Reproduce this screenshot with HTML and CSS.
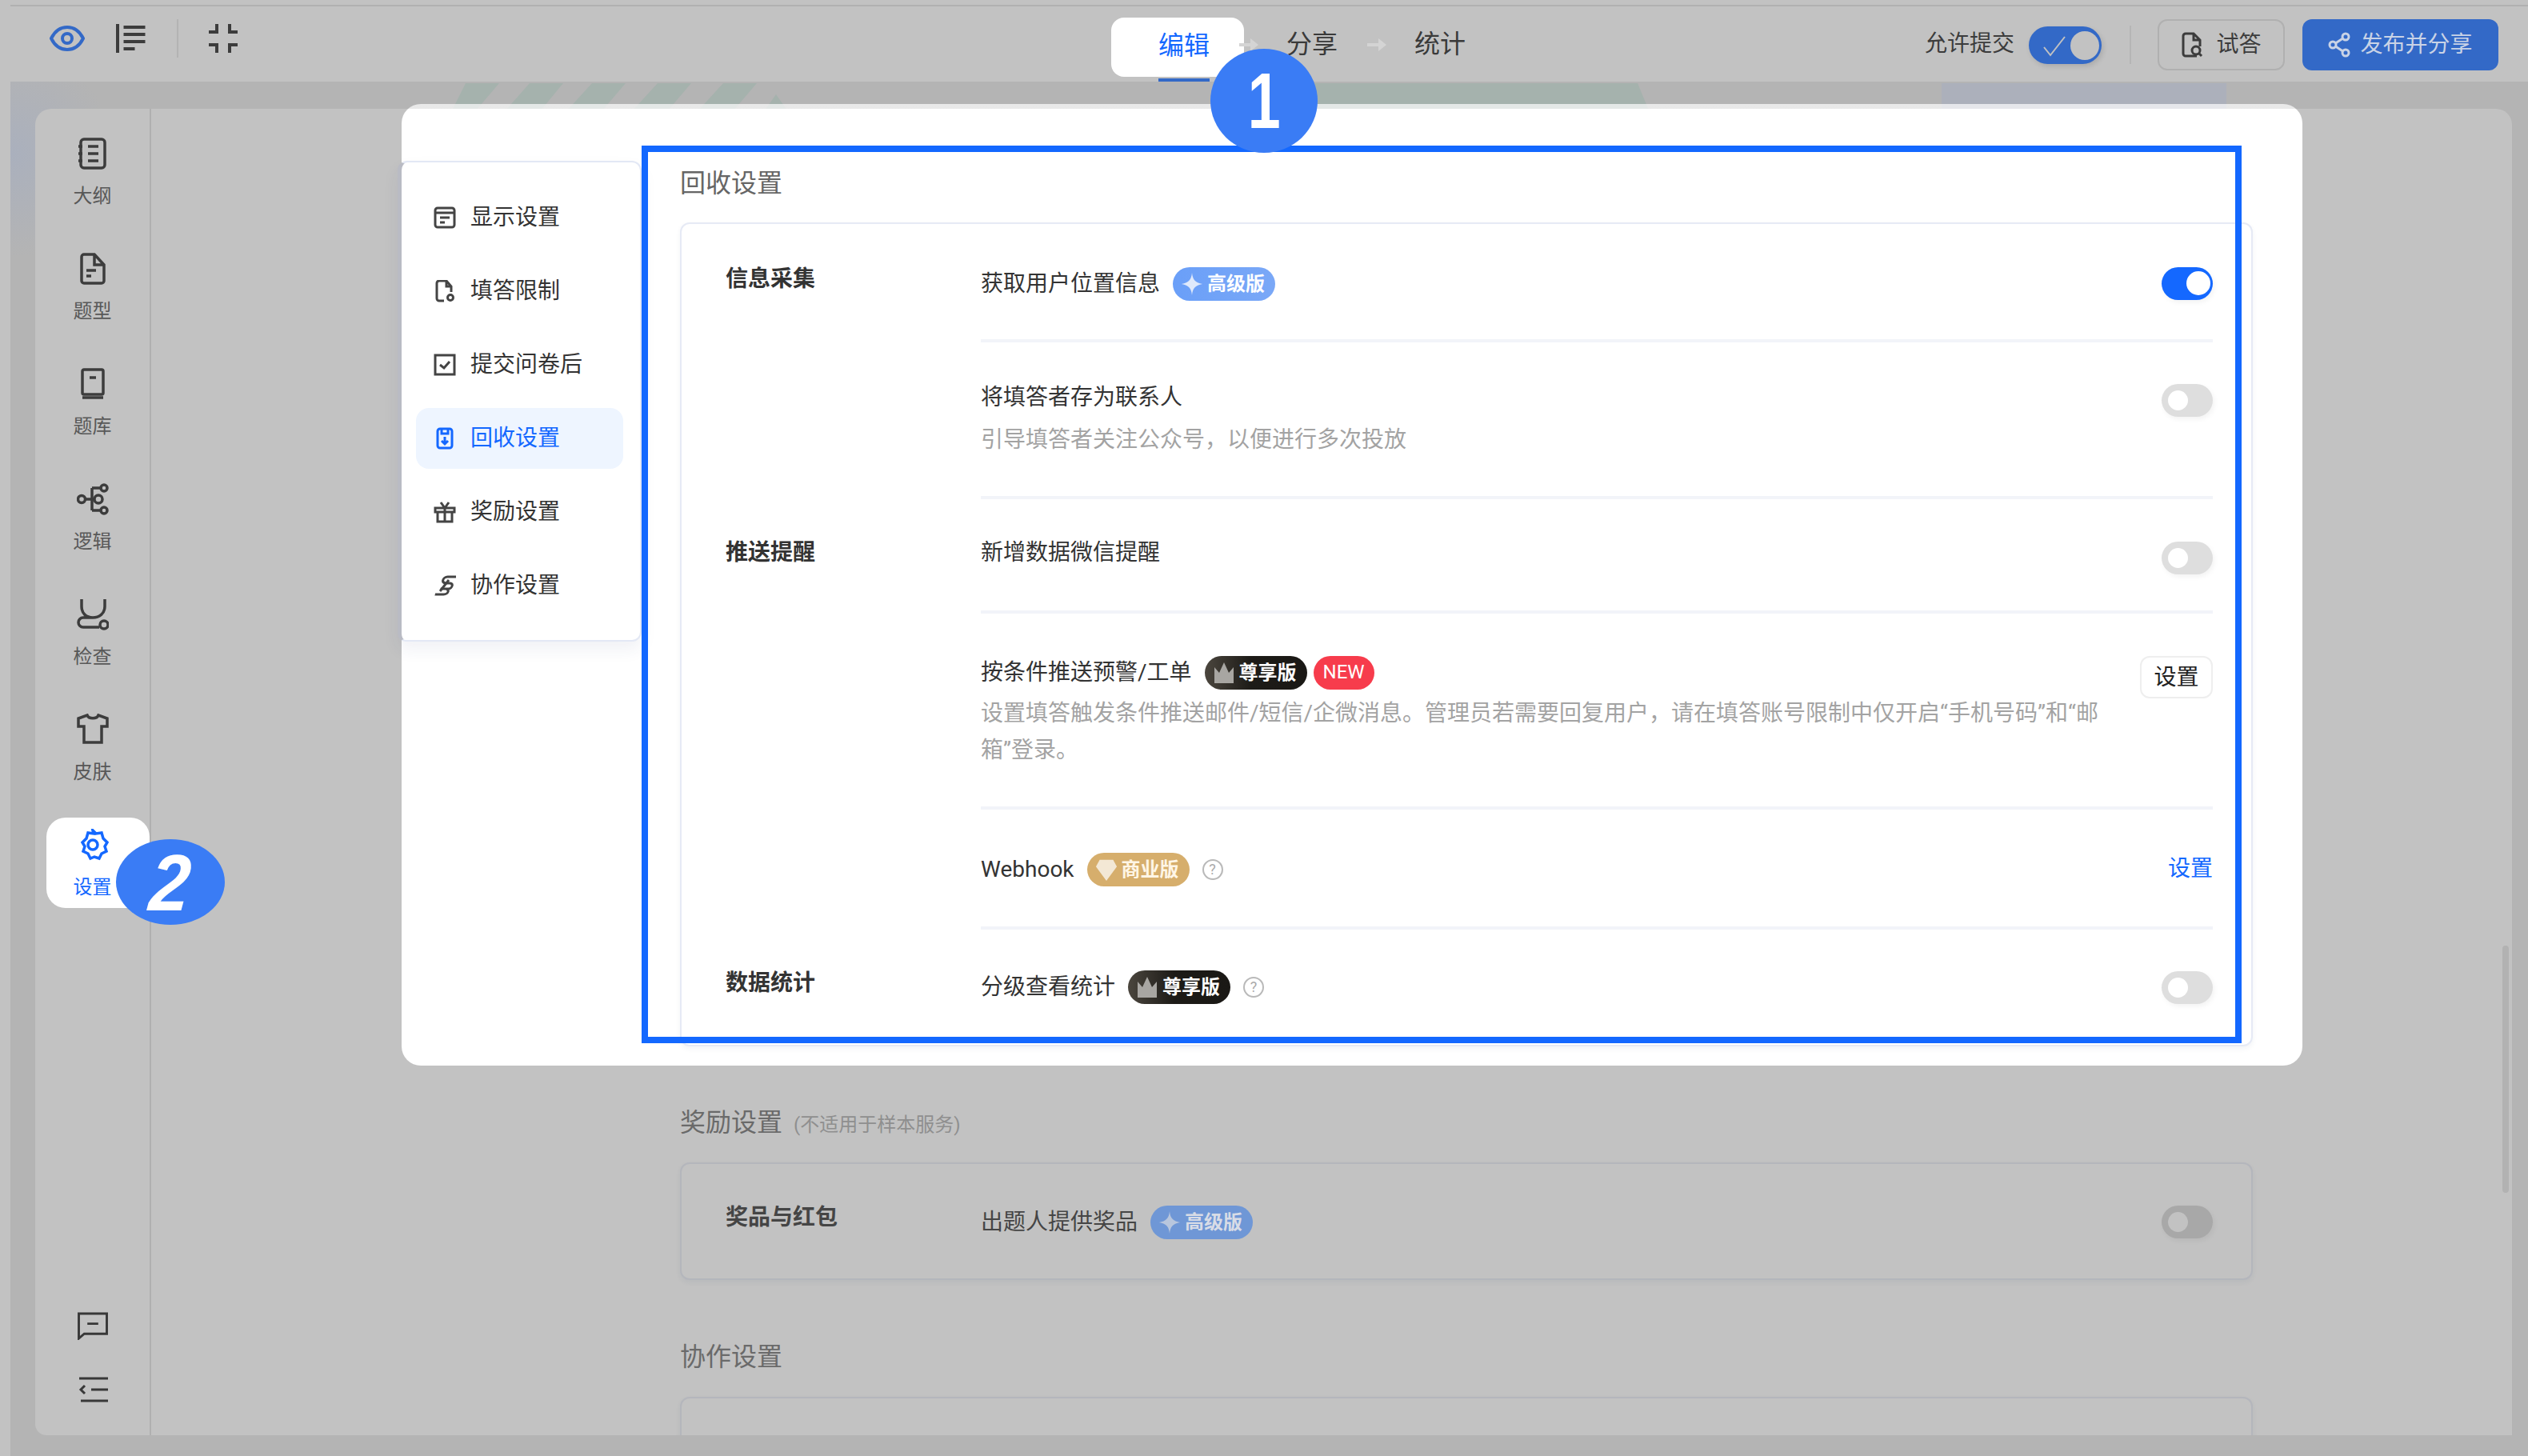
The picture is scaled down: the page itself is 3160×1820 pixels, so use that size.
FILE: index.html
```html
<!DOCTYPE html>
<html lang="zh-CN">
<head>
<meta charset="utf-8">
<title>回收设置</title>
<link rel="stylesheet" href="styles.css">
</head>
<body>
<div class="app">
  <header class="topbar">
    <div class="tools">
      <svg class="ico eye" viewBox="0 0 44 32"><path d="M2 16C7 6 14 2 22 2s15 4 20 14c-5 10-12 14-20 14S7 26 2 16z"/><circle cx="22" cy="16" r="6"/></svg>
      <svg class="ico outline" viewBox="0 0 36 36"><path d="M1.500 0v36M9 4h27M9 13h27M9 22h27M9 31h14"/></svg>
      <span class="tool-sep"></span>
      <svg class="ico shrink" viewBox="0 0 36 36"><path d="M10 0v10H0M26 0v10h10M10 36V26H0M26 36V26h10"/></svg>
    </div>
    <nav class="steps">
      <span class="step-active">编辑</span>
      <svg class="step-arrow arrow-first" viewBox="0 0 24 16"><path d="M0 6h14V0l10 8-10 8v-6H0z"/></svg>
      <span class="step">分享</span>
      <svg class="step-arrow" viewBox="0 0 24 16"><path d="M0 6h14V0l10 8-10 8v-6H0z"/></svg>
      <span class="step">统计</span>
    </nav>
    <div class="actions">
      <span class="allow">允许提交</span>
      <span class="top-switch"><svg class="ico top-check" viewBox="0 0 28 26"><path d="M1 14l8 10L27 1"/></svg><span class="top-knob"></span></span>
      <span class="action-sep"></span>
      <button class="btn-try"><svg class="ico try-ico" viewBox="0 0 28 32"><path d="M20 30H6a3 3 0 0 1-3-3V5a3 3 0 0 1 3-3h10l8 8v8M16 2v8h8"/><circle cx="19" cy="23" r="5"/><path d="M23 27l3 3"/></svg>试答</button>
      <button class="btn-publish"><svg class="ico share-ico" viewBox="0 0 28 32"><circle cx="22" cy="6" r="4"/><circle cx="6" cy="16" r="4"/><circle cx="22" cy="26" r="4"/><path d="M18.500 8L9.500 14M9.500 18l9 6"/></svg>发布并分享</button>
    </div>
  </header>

  <main class="main">
    <svg class="decor" viewBox="0 0 3147 40" preserveAspectRatio="none">
      <g class="decor-green">
        <path d="M569 2h42l-29 34h-30zM649 2h42l-28 34h-44zM727 2h42l-29 34h-44zM809 2h42l-29 34h-44zM891 2h42l-29 34h-44zM957 16l14 20h-28z"/>
        <path d="M1600 2h434l14 34h-448z"/>
      </g>
      <rect class="decor-blue" x="2414" y="2" width="356" height="34"/>
    </svg>
    <div class="workspace">
      <aside class="sidebar">
        <div class="side-item">
          <svg class="ico side-ico" viewBox="0 0 40 40"><rect x="5" y="2" width="30" height="36" rx="4"/><path d="M2 11h5M2 20h5M2 29h5M14 11h13M14 20h13M14 29h13"/></svg>
          <span>大纲</span>
        </div>
        <div class="side-item">
          <svg class="ico side-ico" viewBox="0 0 40 40"><path d="M6 5a3 3 0 0 1 3-3h13l12 13v20a3 3 0 0 1-3 3H9a3 3 0 0 1-3-3zM22 2v13h12M12 22h12M12 29h6"/></svg>
          <span>题型</span>
        </div>
        <div class="side-item">
          <svg class="ico side-ico" viewBox="0 0 40 40"><rect x="7" y="2" width="26" height="31" rx="2"/><path d="M7 37h26M16 12h8"/></svg>
          <span>题库</span>
        </div>
        <div class="side-item">
          <svg class="ico side-ico" viewBox="0 0 40 40"><circle cx="6" cy="20" r="4.500"/><circle cx="27" cy="20" r="5"/><circle cx="34" cy="6" r="4"/><circle cx="34" cy="34" r="4"/><path d="M11 20h11M19 6h11M19 34h11M19 6v28"/></svg>
          <span>逻辑</span>
        </div>
        <div class="side-item">
          <svg class="ico side-ico" viewBox="0 0 40 40"><path d="M6 1v9c0 9 6 14 14 14s15-5 15-14V1M20 24H8a6 6 0 0 0 0 12h20"/><circle cx="34" cy="33" r="5"/></svg>
          <span>检查</span>
        </div>
        <div class="side-item">
          <svg class="ico side-ico" viewBox="0 0 40 40"><path d="M13 2c2 5 12 5 14 0l11 4v10h-7v20H9V16H2V6z"/></svg>
          <span>皮肤</span>
        </div>
        <div class="side-item side-active">
          <svg class="ico side-ico" viewBox="0 0 40 40"><path d="M20 2l4 4 7-1 2 7 5 5-3 5 2 6-6 3-3 6-6-2-5 2-3-6-6-3 2-6-3-5 5-5 2-7 7 1z"/><circle cx="20" cy="20" r="6"/></svg>
          <span>设置</span>
        </div>
        <div class="side-bottom">
          <svg class="ico bottom-ico" viewBox="0 0 40 36"><path d="M2 2h36v26H9l-7 6zM13 15h14"/></svg>
          <svg class="ico collapse-ico" viewBox="0 0 40 32"><path d="M3 2h36M18 16h21M5 30h34M10 11l-5 5 5 5"/></svg>
        </div>
      </aside>
      <section class="canvas">
        <h2 class="sec-title dim-title">奖励设置<small>(不适用于样本服务)</small></h2>
        <div class="sec-card reward-card">
          <div class="group">
            <div class="group-label">奖品与红包</div>
            <div class="group-rows">
              <div class="row row-1 row-last">
                <div class="row-title">出题人提供奖品
                  <span class="badge badge-pro badge-dim"><svg class="badge-ico" viewBox="0 0 28 30"><path d="M14 0c1 9 4 13 14 15-10 2-13 6-14 15-1-9-4-13-14-15C10 13 13 9 14 0z"/></svg>高级版</span>
                </div>
                <span class="switch switch-dim"></span>
              </div>
            </div>
          </div>
        </div>
        <h2 class="sec-title dim-title second-title">协作设置</h2>
        <div class="sec-card collab-card"></div>
      </section>
      <span class="scrollbar"></span>
    </div>
  </main>

  <div class="modal">
    <ul class="menu">
      <li class="menu-item"><svg class="ico menu-ico" viewBox="0 0 28 28"><rect x="2" y="2" width="24" height="24" rx="3"/><path d="M2 8h24M8 14h12M8 20h6"/></svg>显示设置</li>
      <li class="menu-item"><svg class="ico menu-ico" viewBox="0 0 28 28"><path d="M13 26H7a3 3 0 0 1-3-3V4a3 3 0 0 1 3-3h9l6 7v7M16 1v7h6"/><circle cx="21" cy="22" r="3.500"/></svg>填答限制</li>
      <li class="menu-item"><svg class="ico menu-ico" viewBox="0 0 28 28"><rect x="2" y="2" width="24" height="24"/><path d="M8 14l5 4 7-8"/></svg>提交问卷后</li>
      <li class="menu-item menu-active"><svg class="ico menu-ico" viewBox="0 0 28 28"><rect x="5" y="2" width="18" height="24" rx="3"/><path d="M10 3v5h8V3M14 12v9M10 17l4 4 4-4"/></svg>回收设置</li>
      <li class="menu-item"><svg class="ico menu-ico" viewBox="0 0 28 28"><path d="M2 9h24v5H2zM5 14v12h18V14M14 9v17M9 2l5 7 5-7"/></svg>奖励设置</li>
      <li class="menu-item"><svg class="ico menu-ico" viewBox="0 0 28 28"><g transform="translate(5 0) skewX(-14)"><path d="M24 3H13C7 3 7 11 13 11h5c5 0 5 7 0 7H8M3 25h11c6 0 6-7 0-7"/></g><path d="M19 7L8 21"/></svg>协作设置</li>
    </ul>
    <div class="panel">
      <h2 class="sec-title panel-title">回收设置</h2>
      <div class="sec-card main-card">
        <div class="group">
          <div class="group-label">信息采集</div>
          <div class="group-rows">
            <div class="row row-1">
              <div class="row-title">获取用户位置信息
                <span class="badge badge-pro"><svg class="badge-ico" viewBox="0 0 28 30"><path d="M14 0c1 9 4 13 14 15-10 2-13 6-14 15-1-9-4-13-14-15C10 13 13 9 14 0z"/></svg>高级版</span>
              </div>
              <span class="switch switch-on"></span>
            </div>
            <div class="row row-2">
              <div class="row-main">
                <div class="row-title">将填答者存为联系人</div>
                <p class="row-desc">引导填答者关注公众号，以便进行多次投放</p>
              </div>
              <span class="switch"></span>
            </div>
          </div>
        </div>
        <div class="group">
          <div class="group-label">推送提醒</div>
          <div class="group-rows">
            <div class="row row-3">
              <div class="row-title">新增数据微信提醒</div>
              <span class="switch"></span>
            </div>
            <div class="row row-4">
              <div class="row-main">
                <div class="row-title">按条件推送预警/工单
                  <span class="badge-pair">
                    <span class="badge badge-vip"><svg class="badge-ico" viewBox="0 0 28 26"><path d="M2 6l6 7 6-13 6 13 6-7v20H2z"/></svg>尊享版</span>
                    <span class="badge-new">NEW</span>
                  </span>
                </div>
                <p class="row-desc">设置填答触发条件推送邮件/短信/企微消息。管理员若需要回复用户，请在填答账号限制中仅开启“手机号码”和“邮箱”登录。</p>
              </div>
              <button class="btn-set">设置</button>
            </div>
            <div class="row row-5">
              <div class="row-title">Webhook
                <span class="badge badge-biz"><svg class="badge-ico" viewBox="0 0 28 30"><path d="M5 2h18l5 9-14 19L0 11z"/></svg>商业版</span>
                <span class="help">?</span>
              </div>
              <a class="link-set">设置</a>
            </div>
          </div>
        </div>
        <div class="group">
          <div class="group-label">数据统计</div>
          <div class="group-rows">
            <div class="row row-6 row-last">
              <div class="row-title">分级查看统计
                <span class="badge badge-vip"><svg class="badge-ico" viewBox="0 0 28 26"><path d="M2 6l6 7 6-13 6 13 6-7v20H2z"/></svg>尊享版</span>
                <span class="help">?</span>
              </div>
              <span class="switch"></span>
            </div>
          </div>
        </div>
      </div>
    </div>
    <div class="frame"></div>
  </div>

  <div class="callout callout-one"><span>1</span></div>
  <div class="callout callout-two"><span>2</span></div>
</div>
</body>
</html>
```

FILE: styles.css
```css
* { box-sizing: border-box; }
html, body { margin: 0; padding: 0; }
body {
  width: 3160px;
  height: 1820px;
  overflow: hidden;
  font-family: Roboto, "Noto Sans CJK SC", sans-serif;
  font-size: 28px;
  line-height: 40px;
  color: #333;
}
h2, p, ul { margin: 0; padding: 0; }
ul { list-style: none; }
button { font: inherit; cursor: pointer; }
.ico { fill: none; stroke: currentColor; stroke-width: 3; display: block; flex: none; }

.app {
  position: relative;
  width: 3160px;
  height: 1820px;
  padding: 6px 0 0 13px;
  background: #c2c2c2;
  display: flex;
  flex-direction: column;
}

/* top bar */
.topbar {
  height: 96px;
  flex: none;
  border-top: 2px solid #b1b1b1;
  display: grid;
  grid-template-columns: 1376px auto 1fr;
  align-items: start;
}
.tools {
  display: flex;
  align-items: center;
  height: 48px;
  margin-top: 16px;
  padding-left: 49px;
  color: #3c3c3c;
}
.eye { width: 44px; height: 32px; color: #3369c7; stroke-width: 4; margin-right: 39px; }
.outline { width: 37px; height: 36px; stroke-width: 4; margin-right: 39px; }
.tool-sep { width: 2px; height: 48px; background: #b3b3b3; margin-right: 38px; }
.shrink { width: 36px; height: 36px; stroke-width: 4; }

.steps {
  display: flex;
  align-items: center;
  margin-top: 14px;
  height: 74px;
  font-size: 32px;
  line-height: 44px;
  color: #3a3a3a;
}
.step-active {
  position: relative;
  width: 166px;
  height: 74px;
  background: #fff;
  border-radius: 16px;
  color: #1468ff;
  display: flex;
  align-items: center;
  padding: 0 0 4px 59px;
}
.step-active::after {
  content: "";
  position: absolute;
  left: 59px;
  bottom: -8px;
  width: 64px;
  height: 6px;
  background: #3369c7;
}
.step { padding-bottom: 8px; }
.step-arrow { width: 24px; height: 16px; fill: #d4d4d4; margin: 0 35px 6px 37px; flex: none; }
.arrow-first { margin-left: -6px; position: relative; }

.actions {
  display: flex;
  justify-content: flex-end;
  align-items: center;
  height: 64px;
  margin-top: 16px;
  padding-right: 37px;
}
.allow { color: #3c3c3c; margin: -2px 18px 0 0; }
.top-switch {
  position: relative;
  width: 91px;
  height: 47px;
  background: #3369c7;
  border-radius: 24px;
  box-shadow: 2px 3px 6px rgba(0,0,0,.12);
}
.top-check { position: absolute; left: 18px; top: 12px; width: 28px; height: 26px; color: #c2c2c2; stroke-width: 2; }
.top-knob { position: absolute; right: 3px; top: 6px; width: 36px; height: 36px; border-radius: 50%; background: #c2c2c2; }
.action-sep { width: 2px; height: 48px; background: #b5b5b5; margin: 0 33px 0 35px; }
.btn-try {
  width: 159px;
  height: 64px;
  padding: 0;
  background: transparent;
  border: 2px solid #b0b0b0;
  border-radius: 12px;
  color: #3c3c3c;
  display: flex;
  align-items: center;
  justify-content: center;
  gap: 16px;
}
.try-ico { width: 28px; height: 32px; }
.btn-publish {
  width: 245px;
  height: 64px;
  margin-left: 22px;
  padding: 0;
  background: #3369c7;
  border: 0;
  border-radius: 12px;
  color: #c9d3e6;
  display: flex;
  align-items: center;
  justify-content: center;
  gap: 12px;
}
.share-ico { width: 28px; height: 32px; }

/* main */
.main {
  position: relative;
  flex: 1;
  min-height: 0;
  padding: 34px 20px 26px 31px;
  background: radial-gradient(circle 130px at 0 90px, #aab0bd, rgba(170,176,189,0)) #b4b4b4;
}
.decor { position: absolute; left: 0; top: 0; width: 3147px; height: 40px; }
.decor-green { fill: #a5b2ad; }
.decor-blue { fill: #acb0bb; }
.workspace {
  position: relative;
  height: 100%;
  display: flex;
  background: #c2c2c2;
  border-radius: 20px 20px 0 14px;
  overflow: hidden;
}
.sidebar {
  width: 145px;
  flex: none;
  border-right: 2px solid #b0b0b0;
  padding: 22px 0 41px 14px;
  display: flex;
  flex-direction: column;
  gap: 31px;
  font-size: 24px;
  line-height: 34px;
  color: #585858;
}
.side-item {
  width: 129px;
  height: 113px;
  padding: 14px 14px 0 0;
  display: flex;
  flex-direction: column;
  align-items: center;
  gap: 16px;
  flex: none;
}
.side-ico { width: 40px; height: 40px; color: #3c3c3c; stroke-width: 3.500; }
.side-active {
  background: #fff;
  border-radius: 24px;
  color: #1468ff;
}
.side-active .side-ico { color: #1468ff; }
.side-bottom {
  margin-top: auto;
  width: 115px;
  display: flex;
  flex-direction: column;
  align-items: center;
  gap: 46px;
}
.bottom-ico { width: 40px; height: 35px; color: #383838; }
.collapse-ico { width: 40px; height: 32px; color: #383838; }

.canvas {
  flex: 1;
  min-width: 0;
  padding: 1245px 0 0 661px;
}
.sec-title {
  font-size: 32px;
  font-weight: 400;
  line-height: 44px;
  margin-bottom: 28px;
  color: #666;
}
.panel-title { padding-top: 1px; margin-bottom: 27px; }
.sec-title small { font-size: 24px; line-height: 1; color: #8f8f8f; margin-left: 14px; }
.dim-title { color: #6a6a6a; }
.second-title { margin-top: 74px; }
.sec-card {
  width: 1966px;
  padding-top: 2px;
  border: 2px solid #e6eaf5;
  border-radius: 12px;
  background: #fff;
  box-shadow: 0 3px 6px rgba(40,60,110,.06);
}
.reward-card { height: 147px; padding-top: 0; background: #c2c2c2; border-color: #b4b6bc; color: #454545; }
.collab-card { height: 200px; background: #c2c2c2; border-color: #b4b6bc; }
.main-card { height: 1030px; }
.group { display: flex; }
.group-label { width: 319px; margin-left: 55px; padding-top: 47px; font-weight: 700; flex: none; }
.group-rows { width: 1540px; flex: none; }
.row {
  display: flex;
  justify-content: space-between;
  align-items: flex-start;
  border-bottom: 4px solid #f2f4f9;
}
.row-last { border-bottom: 0; }
.row-1 { padding: 52px 0 48px; }
.row-2 { padding: 49px 0 47px; }
.row-3 { padding: 47px 0 45px; }
.row-4 { padding: 53px 0 47px; }
.row-5 { padding: 54px 0 50px; }
.row-6 { padding: 51px 0 0; }
.row-2 .switch { margin-top: 3px; }
.row-3 .switch { margin-top: 6px; }
.row-6 .switch { margin-top: 1px; }
.row-main { width: 1412px; }
.row-title { display: flex; align-items: center; gap: 16px; color: inherit; }
.row-desc { color: #a3a3a3; line-height: 46px; margin-top: 10px; }
.row-4 .row-desc { margin-top: 7px; }
.badge-pair { display: flex; gap: 8px; }
.badge {
  width: 128px;
  height: 42px;
  padding-left: 10px;
  border-radius: 21px;
  display: inline-flex;
  align-items: center;
  gap: 5px;
  font-size: 24px;
  font-weight: 700;
  line-height: 42px;
  color: #fff;
  flex: none;
}
.badge-ico { width: 28px; height: 28px; flex: none; }
.badge-pro { background: linear-gradient(90deg, #6a9ff8, #7aa8f7); }
.badge-pro .badge-ico { fill: #dfe9fb; }
.badge-dim { background: #6f97d6; color: #d8dce6; }
.badge-dim .badge-ico { fill: #b8c6dd; }
.badge-vip { background: linear-gradient(90deg, #4b463e, #1d1b17 45%, #1a1815); }
.badge-vip .badge-ico { fill: #a8a6a2; }
.badge-biz { background: #d6ae6c; color: #fff6e6; }
.badge-biz .badge-ico { fill: #f3e8d5; }
.badge-new {
  width: 76px;
  height: 42px;
  border-radius: 21px;
  background: #f73c4c;
  color: #fff;
  font-size: 24px;
  line-height: 40px;
  text-align: center;
}
.help {
  width: 26px;
  height: 26px;
  border: 2px solid #b9b9b9;
  border-radius: 50%;
  color: #aaa;
  font-size: 18px;
  line-height: 22px;
  text-align: center;
  flex: none;
}
.switch {
  position: relative;
  width: 64px;
  height: 41px;
  border-radius: 21px;
  background: #dedede;
  flex: none;
  box-shadow: 2px 3px 6px rgba(0,0,0,.05);
}
.switch::after {
  content: "";
  position: absolute;
  left: 8px;
  top: 8px;
  width: 25px;
  height: 25px;
  border-radius: 50%;
  background: #fff;
}
.switch-on { background: #1468ff; }
.switch-on::after { left: 31px; top: 5px; width: 30px; height: 30px; }
.switch-dim { background: #a8a8a8; }
.switch-dim::after { background: #c2c2c2; }
.btn-set {
  width: 91px;
  height: 53px;
  padding: 0;
  background: #fff;
  border: 2px solid #eee;
  border-radius: 12px;
  color: #222;
  line-height: 46px;
}
.link-set { color: #1468ff; }

.scrollbar {
  position: absolute;
  right: 4px;
  top: 1046px;
  width: 8px;
  height: 309px;
  border-radius: 4px;
  background: #b2b2b2;
}

/* overlay dialog */
.modal {
  position: absolute;
  left: 502px;
  top: 130px;
  width: 2376px;
  height: 1202px;
  display: flex;
  align-items: flex-start;
  border-radius: 24px;
  background: linear-gradient(rgba(255,255,255,.7) 6px, #fff 6px);
}
.menu {
  width: 305px;
  height: 601px;
  margin: 71px 0 0 -5px;
  padding: 31px 21px 0 18px;
  flex: none;
  display: flex;
  flex-direction: column;
  gap: 16px;
  background: #fff;
  border: 2px solid #e3e8f5;
  border-left: 5px solid #b9bbc4;
  border-radius: 12px 12px 12px 10px;
  box-shadow: 0 10px 20px rgba(40,60,110,.07);
}
.menu-item {
  height: 76px;
  padding-left: 22px;
  display: flex;
  align-items: center;
  gap: 18px;
  border-radius: 16px;
  color: #333;
}
.menu-ico { width: 28px; height: 28px; color: #444; }
.menu-active { background: #eef5ff; color: #1468ff; }
.menu-active .menu-ico { color: #1468ff; }
.panel { margin-left: 48px; padding-top: 76px; width: 1966px; flex: none; }
.frame {
  position: absolute;
  left: 300px;
  top: 52px;
  width: 2000px;
  height: 1122px;
  border: 8px solid #1368ff;
  pointer-events: none;
}

/* numbered callouts */
.callout {
  position: absolute;
  background: #3a7cf5;
  color: #fff;
  font-family: "Liberation Sans", sans-serif;
  font-weight: 700;
  font-size: 98px;
  line-height: 1;
  display: flex;
  align-items: center;
  justify-content: center;
  border-radius: 50%;
}
.callout-one { left: 1513px; top: 61px; width: 134px; height: 130px; }
.callout-one span { display: block; transform: scaleX(.75); }
.callout-two { left: 145px; top: 1049px; width: 136px; height: 107px; }
.callout-two span { display: block; font-style: italic; font-size: 100px; transform: scaleX(.9) skewX(-6deg); }
```
